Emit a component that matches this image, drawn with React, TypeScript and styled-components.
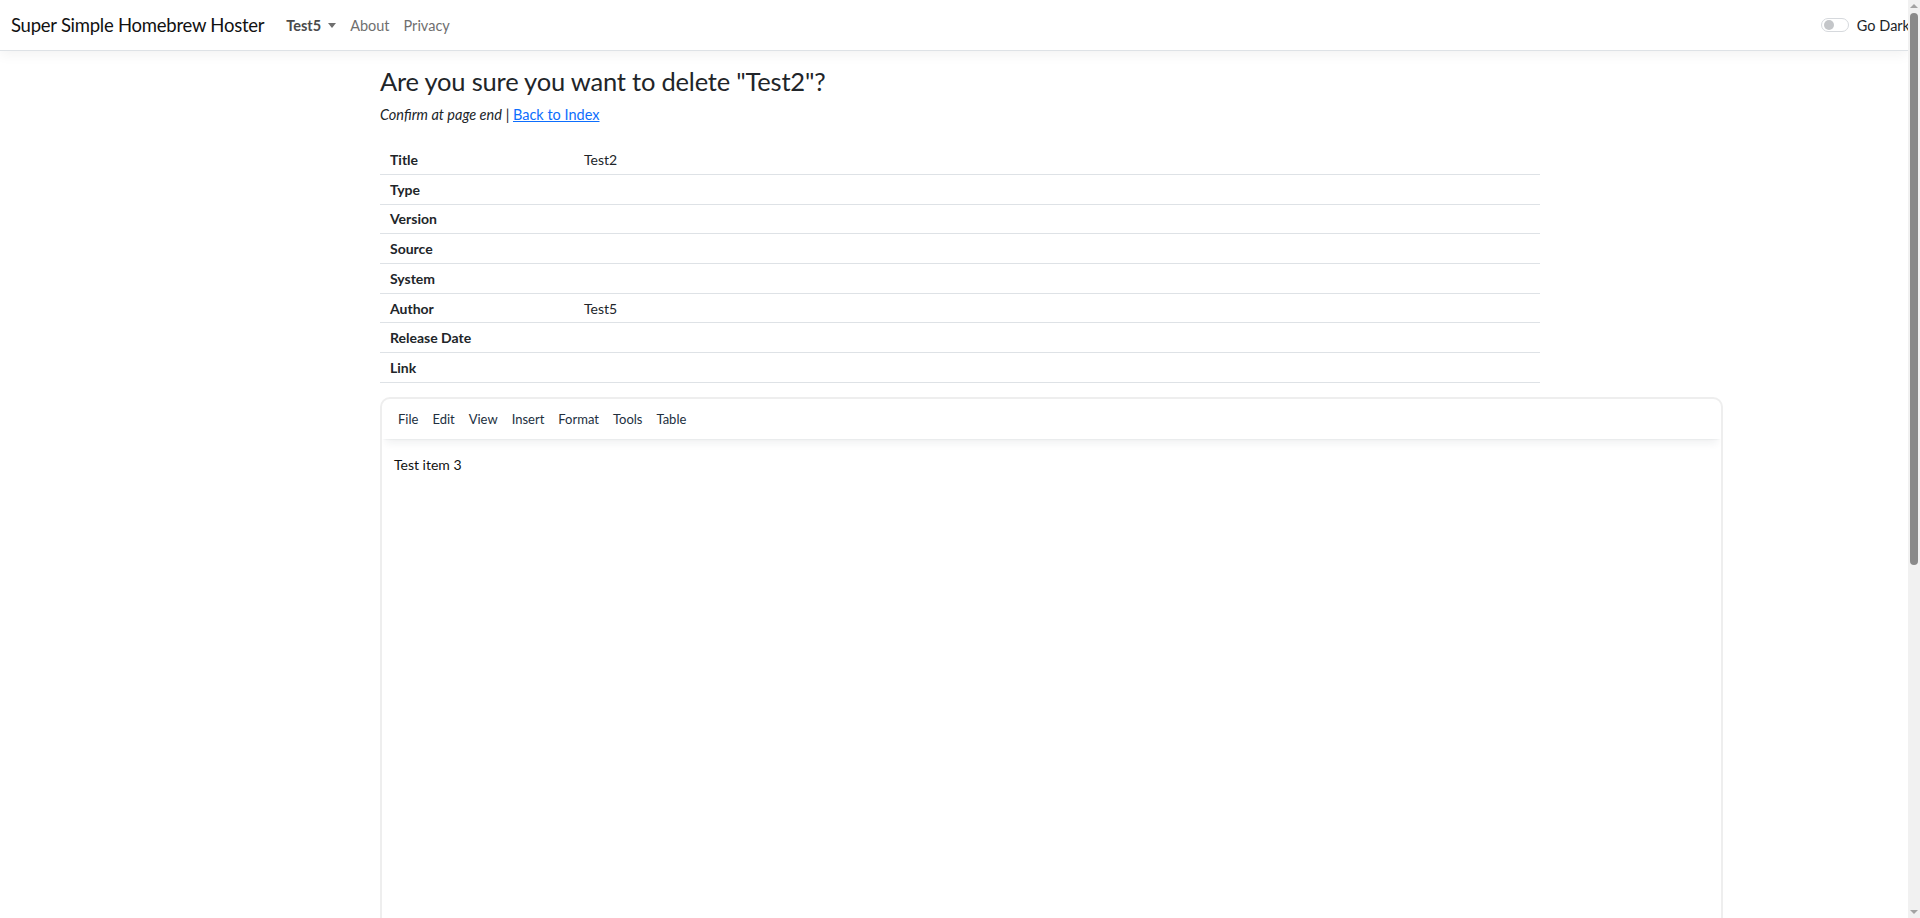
import React from "react";
import styled, { createGlobalStyle } from "styled-components";

const Global = createGlobalStyle`
  html, body { margin: 0; padding: 0; height: 918px; overflow: hidden; background: #fff; }
  body { font-family: Lato, "Open Sans", sans-serif; color: #212529; }
  * { box-sizing: border-box; }
`;

const Shell = styled.div`
  display: flex;
  width: 1920px;
  height: 918px;
  overflow: hidden;
`;

const Page = styled.div`
  flex: 1;
  min-width: 0;
  display: flex;
  flex-direction: column;
`;

const NavBar = styled.nav`
  height: 51px;
  display: flex;
  align-items: center;
  padding: 0 0 0 11px;
  border-bottom: 1px solid #dee2e6;
  box-shadow: 0 4px 12px rgba(0, 0, 0, 0.05);
  flex-shrink: 0;
`;

const Brand = styled.a`
  font-size: 18.5px;
  letter-spacing: -0.25px;
  color: #111;
  text-decoration: none;
  margin-right: 15px;
`;

const NavLinks = styled.div`
  display: flex;
  align-items: center;
  flex: 1;
`;

const NavLink = styled.a<{ $bold?: boolean }>`
  font-size: 14.5px;
  padding: 8px 7px;
  color: ${(p) => (p.$bold ? "#4a4a4a" : "#6f6f6f")};
  font-weight: ${(p) => (p.$bold ? 700 : 400)};
  text-decoration: none;
  display: flex;
  align-items: center;
`;

const Caret = styled.span`
  display: inline-block;
  margin-left: 7px;
  border-top: 5px solid #6f6f6f;
  border-left: 4px solid transparent;
  border-right: 4px solid transparent;
`;

const DarkToggle = styled.label`
  display: flex;
  align-items: center;
  gap: 8px;
  font-size: 14.5px;
  color: #212529;
  white-space: nowrap;
  margin-right: -2px;
`;

const Switch = styled.span`
  width: 28px;
  height: 14px;
  border: 1px solid #d6d9dd;
  border-radius: 7px;
  display: flex;
  align-items: center;
  padding-left: 2px;
  &::before {
    content: "";
    width: 10px;
    height: 10px;
    border-radius: 50%;
    background: #c4c6c9;
  }
`;

const Main = styled.main`
  padding: 13px 0 0 380px;
  display: flex;
  flex-direction: column;
`;

const Heading = styled.h3`
  margin: 0;
  font-size: 25.5px;
  letter-spacing: -0.2px;
  font-weight: 400;
  line-height: 34px;
  color: #212529;
`;

const SubLine = styled.p`
  margin: 6px 0 0;
  font-size: 14.5px;
  line-height: 1.5;
`;

const Em = styled.em``;

const BackLink = styled.a`
  color: #0d6efd;
  text-decoration: underline;
`;

const InfoTable = styled.table`
  width: 1160px;
  border-collapse: collapse;
  margin-top: 19px;
  font-size: 14px;
`;

const Row = styled.tr`
  border-bottom: 1px solid #dee2e6;
`;

const LabelCell = styled.th`
  text-align: left;
  width: 201px;
  padding: 4px 10px;
  height: 29.7px;
  font-weight: 700;
`;

const ValueCell = styled.td`
  padding: 4px 3px;
`;

const Editor = styled.div`
  margin-top: 14px;
  width: 1343px;
  height: 700px;
  border: 2px solid #eeeeee;
  border-radius: 10px;
  display: flex;
  flex-direction: column;
  overflow: hidden;
`;

const MenuBar = styled.div`
  height: 40px;
  display: flex;
  align-items: center;
  padding: 0 4px 0 9px;
  box-shadow: 0 2px 2px -2px rgba(34, 47, 62, 0.1), 0 8px 8px -4px rgba(34, 47, 62, 0.07);
  position: relative;
  z-index: 1;
`;

const MenuItem = styled.span`
  font-size: 13px;
  color: #222f3e;
  padding: 0 7px;
`;

const Content = styled.div`
  padding: 17px 12px;
  font-size: 14px;
  color: #111;
`;

const ScrollBar = styled.div`
  width: 12px;
  flex-shrink: 0;
  background: #f1f1f1;
  display: flex;
  flex-direction: column;
  align-items: center;
`;

const Arrow = styled.span<{ $down?: boolean }>`
  margin: 4px 0;
  border-left: 4px solid transparent;
  border-right: 4px solid transparent;
  ${(p) => (p.$down ? "border-top: 4px solid #a3a3a3;" : "border-bottom: 4px solid #a3a3a3;")}
`;

const Thumb = styled.div`
  width: 8px;
  height: 552px;
  margin-top: 1px;
  border-radius: 4px;
  background: #8a8a8a;
`;

const Spacer = styled.div`
  flex: 1;
`;

const rows: [string, string][] = [
  ["Title", "Test2"],
  ["Type", ""],
  ["Version", ""],
  ["Source", ""],
  ["System", ""],
  ["Author", "Test5"],
  ["Release Date", ""],
  ["Link", ""],
];

export default function App() {
  return (
    <Shell>
      <Global />
      <Page>
        <NavBar>
          <Brand href="#">Super Simple Homebrew Hoster</Brand>
          <NavLinks>
            <NavLink $bold href="#">
              Test5
              <Caret />
            </NavLink>
            <NavLink href="#">About</NavLink>
            <NavLink href="#">Privacy</NavLink>
          </NavLinks>
          <DarkToggle>
            <Switch />
            Go Dark
          </DarkToggle>
        </NavBar>
        <Main>
          <Heading>Are you sure you want to delete "Test2"?</Heading>
          <SubLine>
            <Em>Confirm at page end</Em> | <BackLink href="#">Back to Index</BackLink>
          </SubLine>
          <InfoTable>
            <tbody>
              {rows.map(([k, v]) => (
                <Row key={k}>
                  <LabelCell>{k}</LabelCell>
                  <ValueCell>{v}</ValueCell>
                </Row>
              ))}
            </tbody>
          </InfoTable>
          <Editor>
            <MenuBar>
              {["File", "Edit", "View", "Insert", "Format", "Tools", "Table"].map((m) => (
                <MenuItem key={m}>{m}</MenuItem>
              ))}
            </MenuBar>
            <Content>Test item 3</Content>
          </Editor>
        </Main>
      </Page>
      <ScrollBar>
        <Arrow />
        <Thumb />
        <Spacer />
        <Arrow $down />
      </ScrollBar>
    </Shell>
  );
}
